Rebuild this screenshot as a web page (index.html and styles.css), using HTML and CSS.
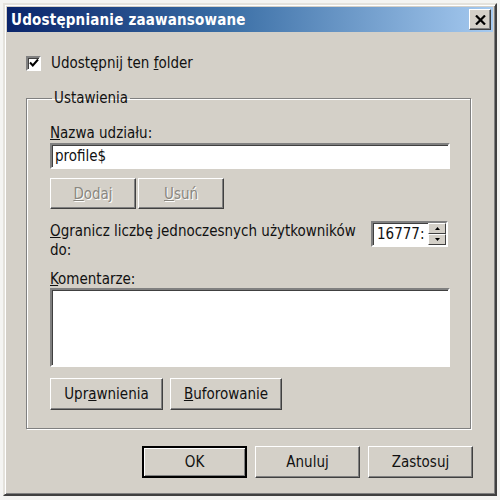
FILE: index.html
```html
<!DOCTYPE html>
<html lang="pl">
<head>
    <meta charset="UTF-8">
    <title>Udostępnianie zaawansowane</title>
    <link rel="stylesheet" href="styles.css">
</head>
<body>
    <div class="window">
        <div class="titlebar">
            <span class="title">Udostępnianie zaawansowane</span>
            <button class="close-btn" aria-label="Zamknij">
                <svg width="11" height="10" viewBox="0 0 11 10">
                    <path d="M1 0.5 L10 9.5 M10 0.5 L1 9.5" stroke="#000" stroke-width="2.2"/>
                </svg>
            </button>
        </div>

        <div class="content">
            <label class="check-row">
                <span class="checkbox">
                    <svg width="10" height="10" viewBox="0 0 10 10">
                        <path d="M1 4.5 L3.8 7.5 L9 1.5" fill="none" stroke="#000" stroke-width="2"/>
                    </svg>
                </span>
                <span>Udostępnij ten <u>f</u>older</span>
            </label>

            <fieldset class="group">
                <legend>Ustawienia</legend>

                <div class="field-label"><u>N</u>azwa udziału:</div>
                <div class="textbox">profile$</div>

                <div class="btn-row">
                    <button class="btn disabled"><u>D</u>odaj</button>
                    <button class="btn disabled"><u>U</u>suń</button>
                </div>

                <div class="limit-row">
                    <div class="limit-text">
                        <div><u>O</u>granicz liczbę jednoczesnych użytkowników</div>
                        <div>do:</div>
                    </div>
                    <div class="spin">
                        <span class="spin-value">16777:</span>
                        <span class="spin-btns">
                            <span class="spin-btn">
                                <svg width="5" height="3" viewBox="0 0 5 3"><path d="M2.5 0 L5 3 L0 3 Z" fill="#000"/></svg>
                            </span>
                            <span class="spin-btn">
                                <svg width="5" height="3" viewBox="0 0 5 3"><path d="M0 0 L5 0 L2.5 3 Z" fill="#000"/></svg>
                            </span>
                        </span>
                    </div>
                </div>

                <div class="field-label comments-label"><u>K</u>omentarze:</div>
                <div class="textarea"></div>

                <div class="btn-row lower">
                    <button class="btn wide">Upr<u>a</u>wnienia</button>
                    <button class="btn wide"><u>B</u>uforowanie</button>
                </div>
            </fieldset>

            <div class="dialog-buttons">
                <button class="btn action default">OK</button>
                <button class="btn action">Anuluj</button>
                <button class="btn action">Zastosuj</button>
            </div>
        </div>
    </div>
</body>
</html>
```

FILE: styles.css
```css
* {
    box-sizing: border-box;
}

body {
    margin: 0;
    padding: 3px;
    background: #f4f4f2;
    font-family: 'DejaVu Sans Condensed', 'DejaVu Sans', sans-serif;
    font-size: 15px;
    color: #111;
}

.window {
    width: 494px;
    height: 493px;
    background: #d4d0c8;
    border: 2px solid;
    border-color: #e4e2dc #404040 #404040 #e4e2dc;
    box-shadow: inset 1px 1px 0 #fff, inset -1px -1px 0 #808080;
    padding: 2px;
    display: flex;
    flex-direction: column;
}

.titlebar {
    height: 25px;
    background: linear-gradient(to right, #0a246a, #3a6ea5 45%, #a6caf0);
    display: flex;
    align-items: center;
    justify-content: space-between;
    padding: 0 2px 0 4px;
}

.title {
    color: #fff;
    font-weight: bold;
    font-size: 15px;
    letter-spacing: 0.2px;
}

.close-btn {
    width: 22px;
    height: 21px;
    padding: 0;
    background: #d4d0c8;
    border: 1px solid;
    border-color: #fff #404040 #404040 #fff;
    box-shadow: inset -1px -1px 0 #808080;
    display: flex;
    align-items: center;
    justify-content: center;
}

.content {
    flex: 1;
    padding: 22px 0 0 19px;
    display: flex;
    flex-direction: column;
}

.check-row {
    display: flex;
    align-items: center;
    gap: 10px;
    height: 18px;
}

.checkbox {
    width: 15px;
    height: 15px;
    background: #fff;
    border: 2px solid;
    border-color: #808080 #fff #fff #808080;
    box-shadow: inset 1px 1px 0 #404040;
    display: flex;
    align-items: center;
    justify-content: center;
}

.group {
    margin: 17px 0 0 0;
    width: 445px;
    padding: 17px 0 18px 23px;
    border: 1px solid #808080;
    box-shadow: inset 1px 1px 0 #fff, 1px 1px 0 #fff;
}

.group legend {
    padding: 0 2px;
    margin-left: 2px;
}

.field-label {
    height: 18px;
    line-height: 18px;
}

.textbox {
    margin-top: 1px;
    width: 400px;
    height: 26px;
    background: #fff;
    border: 2px solid;
    border-color: #808080 #fff #fff #808080;
    box-shadow: inset 1px 1px 0 #404040;
    padding-left: 3px;
    line-height: 22px;
}

.btn {
    font-family: inherit;
    font-size: 15px;
    color: #111;
    background: #d4d0c8;
    border: 1px solid;
    border-color: #fff #404040 #404040 #fff;
    box-shadow: inset -1px -1px 0 #808080;
    padding: 0;
}

.btn-row {
    display: flex;
    gap: 2px;
    margin-top: 9px;
}

.btn-row .btn {
    width: 86px;
    height: 31px;
}

.btn.disabled {
    color: #8a877f;
    text-shadow: 1px 1px 0 #fff;
}

.limit-row {
    margin-top: 13px;
    display: flex;
    justify-content: space-between;
    width: 398px;
}

.limit-text {
    width: 310px;
    line-height: 19px;
}

.spin {
    margin-top: -1px;
    width: 77px;
    height: 26px;
    background: #fff;
    border: 2px solid;
    border-color: #808080 #fff #fff #808080;
    box-shadow: inset 1px 1px 0 #404040;
    display: flex;
    justify-content: space-between;
    overflow: hidden;
}

.spin-value {
    padding: 2px 0 0 4px;
    white-space: nowrap;
}

.spin-btns {
    flex: none;
    width: 18px;
    display: flex;
    flex-direction: column;
}

.spin-btn {
    flex: 1;
    background: #d4d0c8;
    border: 1px solid;
    border-color: #fff #404040 #404040 #fff;
    display: flex;
    align-items: center;
    justify-content: center;
}

.comments-label {
    margin-top: 10px;
}

.textarea {
    width: 400px;
    height: 79px;
    background: #fff;
    border: 2px solid;
    border-color: #808080 #fff #fff #808080;
    box-shadow: inset 1px 1px 0 #404040;
}

.btn-row.lower {
    gap: 7px;
    margin-top: 11px;
}

.btn-row.lower .btn {
    width: 113px;
    height: 32px;
}

.btn-row.lower .btn + .btn {
    width: 112px;
}

.dialog-buttons {
    display: flex;
    justify-content: flex-end;
    gap: 8px;
    margin-top: 17px;
    padding-right: 20px;
}

.btn.action {
    width: 105px;
    height: 32px;
}

.btn.default {
    border: 2px solid #000;
    box-shadow: inset 1px 1px 0 #fff, inset -1px -1px 0 #808080;
}
```
